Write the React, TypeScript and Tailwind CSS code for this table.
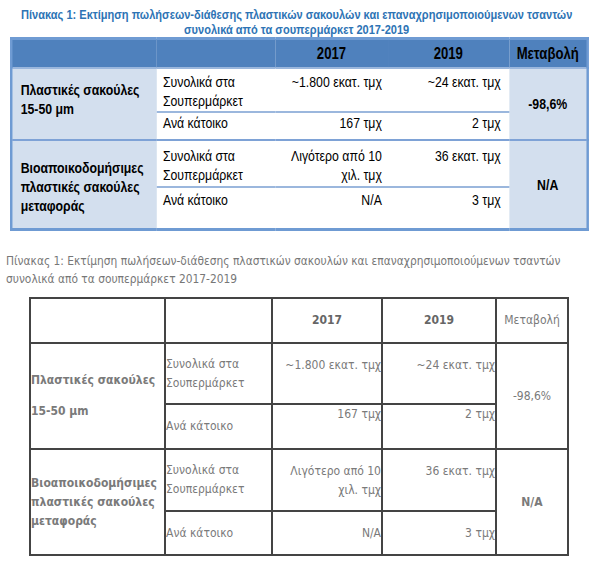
import React from 'react';

// Arial Narrow isn't installed, so Liberation Sans is squeezed horizontally instead
const narrow = "font-['Liberation_Sans_Narrow','Liberation_Sans',sans-serif]";
const tahoma = "font-['DejaVu_Sans_Condensed','DejaVu_Sans',sans-serif]";
const squeeze = 'origin-left scale-x-[0.82]';

// Top table: Word-style blue table (widths are pre-squeeze)
const TopTable: React.FC = () => {
  const light = 'bg-[#d3dfee]';
  const sub = 'border-b-2 border-[#9bb7dd]';
  const row = 'border-b-2 border-[#7ea2d6]';
  return (
    <div className={`ml-[10px] w-[703px] ${squeeze}`}>
      <table className={`w-[703px] table-fixed border-collapse border-[3px] border-[#6f9bd3] text-[15px] leading-[19px] text-black ${narrow}`}>
        <colgroup>
          <col className="w-[177px]" />
          <col className="w-[145px]" />
          <col className="w-[137px]" />
          <col className="w-[148px]" />
          <col className="w-[96px]" />
        </colgroup>
        <thead>
          <tr className="h-[29px] bg-[#4f81bd] border-b-2 border-[#9bb7dd] text-[16px] font-bold">
            <th></th>
            <th></th>
            <th className="text-center font-bold">2017</th>
            <th className="text-center font-bold">2019</th>
            <th className="text-center font-bold">Μεταβολή</th>
          </tr>
        </thead>
        <tbody>
          <tr className={`h-[44px] ${sub}`}>
            <td rowSpan={2} className={`${light} ${row} pl-[10px] pb-[10px] align-middle font-bold`}>
              Πλαστικές σακούλες
              <br />
              15-50 μm
            </td>
            <td className="pl-[8px] pt-[3px] align-top">
              Συνολικά στα
              <br />
              Σουπερμάρκετ
            </td>
            <td className="pr-[7px] pt-[3px] align-top text-right whitespace-nowrap">~1.800 εκατ. τμχ</td>
            <td className="pr-[10px] pt-[3px] align-top text-right whitespace-nowrap">~24 εκατ. τμχ</td>
            <td rowSpan={2} className={`${light} ${row} text-center align-middle font-bold`}>-98,6%</td>
          </tr>
          <tr className={`h-[28px] ${row}`}>
            <td className="pl-[8px] align-top">Ανά κάτοικο</td>
            <td className="pr-[7px] align-top text-right">167 τμχ</td>
            <td className="pr-[10px] align-top text-right">2 τμχ</td>
          </tr>
          <tr className={`h-[47px] ${sub}`}>
            <td rowSpan={2} className={`${light} pl-[10px] pt-[4px] align-middle font-bold whitespace-nowrap`}>
              Βιοαποικοδομήσιμες
              <br />
              πλαστικές σακούλες
              <br />
              μεταφοράς
            </td>
            <td className="pl-[8px] pt-[5px] align-top">
              Συνολικά στα
              <br />
              Σουπερμάρκετ
            </td>
            <td className="pr-[7px] pt-[5px] align-top text-right whitespace-nowrap">
              Λιγότερο από 10
              <br />
              χιλ. τμχ
            </td>
            <td className="pr-[10px] pt-[5px] align-top text-right">36 εκατ. τμχ</td>
            <td rowSpan={2} className={`${light} text-center align-middle font-bold`}>N/A</td>
          </tr>
          <tr className="h-[43px]">
            <td className="pl-[8px] pt-[2px] align-top">Ανά κάτοικο</td>
            <td className="pr-[7px] pt-[2px] align-top text-right">N/A</td>
            <td className="pr-[10px] pt-[2px] align-top text-right">3 τμχ</td>
          </tr>
        </tbody>
      </table>
    </div>
  );
};

// Bottom table: plain web version with dark grid lines
const BottomTable: React.FC = () => {
  const cell = 'border-2 border-[#444] p-0';
  return (
    <table className={`ml-[29px] w-[538px] table-fixed border-collapse text-[12px] leading-[19px] text-[#7a7a7a] ${tahoma}`}>
      <colgroup>
        <col className="w-[135px]" />
        <col className="w-[107px]" />
        <col className="w-[110px]" />
        <col className="w-[114px]" />
        <col className="w-[72px]" />
      </colgroup>
      <tbody>
        <tr className="h-[45px]">
          <td className={cell}></td>
          <td className={cell}></td>
          <td className={`${cell} text-center font-bold text-[#666]`}>2017</td>
          <td className={`${cell} text-center font-bold text-[#666]`}>2019</td>
          <td className={`${cell} text-center`}>Μεταβολή</td>
        </tr>
        <tr className="h-[61px]">
          <td rowSpan={2} className={`${cell} align-middle font-bold`}>
            <p>Πλαστικές σακούλες</p>
            <p className="mt-[12px]">15-50 μm</p>
          </td>
          <td className={`${cell} align-middle`}>
            Συνολικά στα
            <br />
            Σουπερμάρκετ
          </td>
          <td className={`${cell} pt-[12px] align-top text-right`}>~1.800 εκατ. τμχ</td>
          <td className={`${cell} pt-[12px] align-top text-right`}>~24 εκατ. τμχ</td>
          <td rowSpan={2} className={`${cell} text-center align-middle`}>-98,6%</td>
        </tr>
        <tr className="h-[45px]">
          <td className={`${cell} align-middle`}>Ανά κάτοικο</td>
          <td className={`${cell} align-top text-right`}>167 τμχ</td>
          <td className={`${cell} align-top text-right`}>2 τμχ</td>
        </tr>
        <tr className="h-[62px]">
          <td rowSpan={2} className={`${cell} align-middle font-bold`}>
            Βιοαποικοδομήσιμες
            <br />
            πλαστικές σακούλες
            <br />
            μεταφοράς
          </td>
          <td className={`${cell} align-middle`}>
            Συνολικά στα
            <br />
            Σουπερμάρκετ
          </td>
          <td className={`${cell} pt-[12px] align-top text-right`}>
            Λιγότερο από 10
            <br />
            χιλ. τμχ
          </td>
          <td className={`${cell} pt-[12px] align-top text-right`}>36 εκατ. τμχ</td>
          <td rowSpan={2} className={`${cell} text-center align-middle font-bold`}>N/A</td>
        </tr>
        <tr className="h-[44px]">
          <td className={`${cell} align-middle`}>Ανά κάτοικο</td>
          <td className={`${cell} align-middle text-right`}>N/A</td>
          <td className={`${cell} align-middle text-right`}>3 τμχ</td>
        </tr>
      </tbody>
    </table>
  );
};

export default function App() {
  return (
    <div className="w-[601px] h-[573px] bg-white overflow-hidden">
      <div className={`w-[698px] pt-[7px] text-center text-[13px] leading-[15px] font-bold text-[#2e74b5] origin-left scale-x-[0.85] ${narrow}`}>
        Πίνακας 1: Εκτίμηση πωλήσεων-διάθεσης πλαστικών σακουλών και επαναχρησιμοποιούμενων τσαντών
        <br />
        συνολικά από τα σουπερμάρκετ 2017-2019
      </div>
      <TopTable />
      <p className={`mt-[21px] pl-[6px] text-[11.85px] leading-[18px] text-[#777] ${tahoma}`}>
        Πίνακας 1: Εκτίμηση πωλήσεων-διάθεσης πλαστικών σακουλών και επαναχρησιμοποιούμενων τσαντών
        <br />
        συνολικά από τα σουπερμάρκετ 2017-2019
      </p>
      <div className="mt-[9px]">
        <BottomTable />
      </div>
    </div>
  );
}
